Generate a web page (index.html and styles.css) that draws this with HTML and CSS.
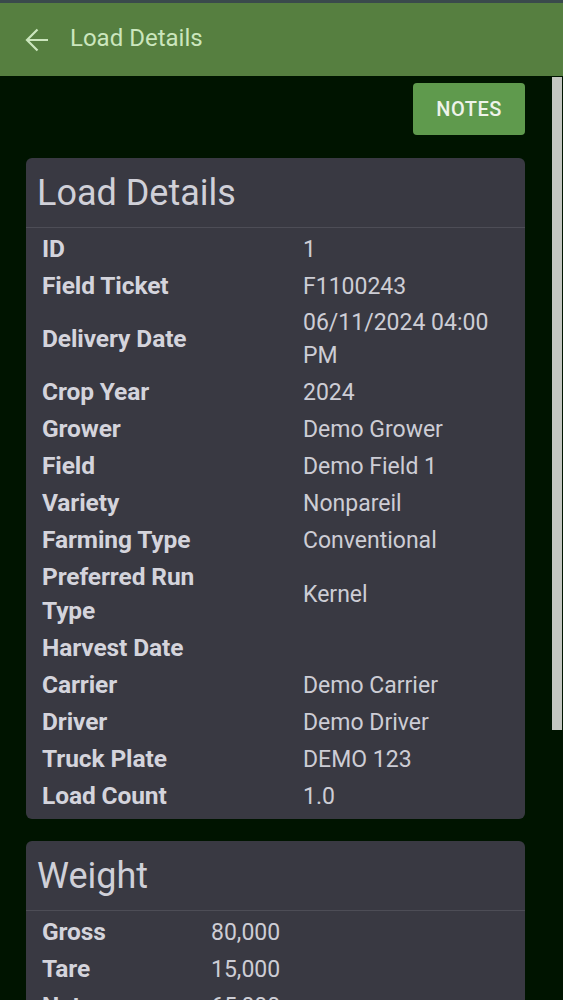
FILE: index.html
```html
<!DOCTYPE html>
<html>

<head>
    <link rel="stylesheet" href="styles.css">
</head>

<body>
    <div class="status-strip"></div>
    <header class="appbar">
        <svg class="back" width="24" height="24" viewBox="0 0 24 24">
            <path d="M23 12H2.5M12.5 1.5L2 12l10.5 10.5" fill="none" stroke="currentColor" stroke-width="2.2" />
        </svg>
        <span class="appbar-title">Load Details</span>
    </header>

    <div class="screen">
        <main class="content">
            <div class="actions">
                <button class="notes">NOTES</button>
            </div>

            <section class="card details">
                <h2 class="card-title">Load Details</h2>
                <div class="row"><span class="label">ID</span><span class="value">1</span></div>
                <div class="row"><span class="label">Field Ticket</span><span class="value">F1100243</span></div>
                <div class="row"><span class="label">Delivery Date</span><span class="value">06/11/2024 04:00 PM</span></div>
                <div class="row"><span class="label">Crop Year</span><span class="value">2024</span></div>
                <div class="row"><span class="label">Grower</span><span class="value">Demo Grower</span></div>
                <div class="row"><span class="label">Field</span><span class="value">Demo Field 1</span></div>
                <div class="row"><span class="label">Variety</span><span class="value">Nonpareil</span></div>
                <div class="row"><span class="label">Farming Type</span><span class="value">Conventional</span></div>
                <div class="row"><span class="label">Preferred Run Type</span><span class="value">Kernel</span></div>
                <div class="row"><span class="label">Harvest Date</span><span class="value"></span></div>
                <div class="row"><span class="label">Carrier</span><span class="value">Demo Carrier</span></div>
                <div class="row"><span class="label">Driver</span><span class="value">Demo Driver</span></div>
                <div class="row"><span class="label">Truck Plate</span><span class="value">DEMO 123</span></div>
                <div class="row"><span class="label">Load Count</span><span class="value">1.0</span></div>
            </section>

            <section class="card weight">
                <h2 class="card-title">Weight</h2>
                <div class="row"><span class="label">Gross</span><span class="value">80,000</span></div>
                <div class="row"><span class="label">Tare</span><span class="value">15,000</span></div>
                <div class="row"><span class="label">Net</span><span class="value">65,000</span></div>
            </section>
        </main>
        <div class="scrollbar">
            <div class="thumb"></div>
        </div>
    </div>
</body>

</html>
```

FILE: styles.css
```css
body {
    margin: 0;
    padding: 0;
    background: #001400;
    font-family: Roboto, "Liberation Sans", sans-serif;
    height: 1000px;
    overflow: hidden;
}

.status-strip {
    height: 3px;
    background: #3a4a4c;
}

.appbar {
    height: 73px;
    background: #567f40;
    color: #cbe6bd;
    display: flex;
    align-items: center;
    padding-left: 25px;
    box-sizing: border-box;
}

.back {
    flex-shrink: 0;
}

.appbar-title {
    margin-left: 21px;
    font-size: 24px;
    padding-bottom: 3px;
}

.screen {
    display: flex;
}

.content {
    flex: 1;
    padding: 7px 27px 0 26px;
}

.scrollbar {
    width: 11px;
    padding-top: 1px;
}

.thumb {
    width: 10px;
    height: 653px;
    background: #c3c6c1;
}

.actions {
    display: flex;
    justify-content: flex-end;
    margin-bottom: 23px;
}

.notes {
    width: 112px;
    height: 52px;
    background: #5f9a4d;
    color: #eef3ea;
    border: none;
    border-radius: 4px;
    font-family: inherit;
    font-size: 20px;
    font-weight: 500;
    letter-spacing: 0.5px;
    cursor: pointer;
}

.card {
    background: #393942;
    border-radius: 6px;
    margin-bottom: 22px;
    padding-bottom: 5px;
    color: #d4d4dc;
}

.card-title {
    margin: 0 0 2px;
    height: 69px;
    line-height: 71px;
    padding-left: 11px;
    font-size: 36px;
    font-weight: 400;
    color: #d0d0d8;
    border-bottom: 1px solid #4d4d56;
}

.row {
    display: grid;
    align-items: center;
    padding: 2px 16px 1px 16px;
    font-size: 23px;
}

.details .row {
    grid-template-columns: 261px 1fr;
}

.weight .row {
    grid-template-columns: 169px 1fr;
}

.label {
    font-weight: 700;
    line-height: 34px;
    padding-right: 70px;
    font-size: 24.5px;
    letter-spacing: -0.1px;
}

.weight .label {
    padding-right: 0;
}

.value {
    line-height: 33px;
    color: #cdcdd5;
}
```
